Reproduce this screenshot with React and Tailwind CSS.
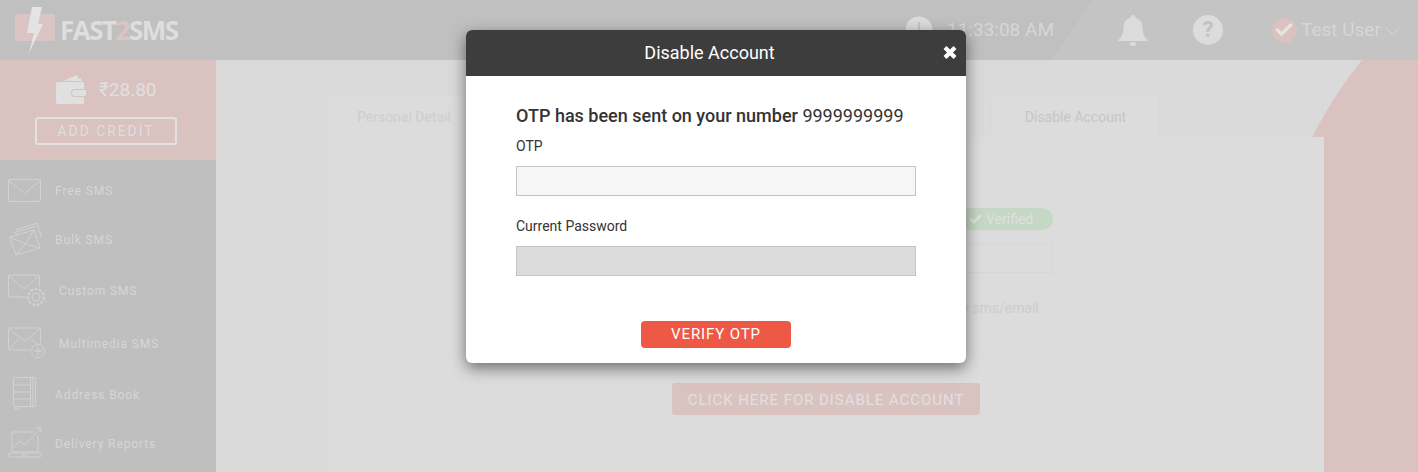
import { Check } from 'lucide-react'

const NAV_ITEMS = [
  { label: 'Free SMS', h: 'h-[49px]', textClass: '', icon: 'mail' },
  { label: 'Bulk SMS', h: 'h-[49px]', textClass: '', icon: 'bulk' },
  { label: 'Custom SMS', h: 'h-[53px]', textClass: 'ml-[4px]', icon: 'gear' },
  { label: 'Multimedia SMS', h: 'h-[53px]', textClass: 'ml-[4px]', icon: 'plus' },
  { label: 'Address Book', h: 'h-[49px]', textClass: '', icon: 'book' },
  { label: 'Delivery Reports', h: 'h-[50px]', textClass: '', icon: 'chart' },
]

function NavIcon({ type }) {
  const common = { width: 40, height: 36, viewBox: '0 0 40 36', fill: 'none', stroke: '#d2d2d2', strokeWidth: 1 }
  if (type === 'mail') {
    return (
      <svg {...common}>
        <rect x="0.5" y="6.5" width="32" height="22" rx="1.5" />
        <path d="M1 8l15.500 12L32 8" />
      </svg>
    )
  }
  if (type === 'bulk') {
    return (
      <svg {...common}>
        <path d="M8 8L29 1l4 13-2 1M2 15l24-7 6 18-24 7-6-18z" />
        <path d="M2 15l15 7 9-14M8 33l9-11 15 4" />
        <path d="M6 11l22-7" />
      </svg>
    )
  }
  if (type === 'gear') {
    return (
      <svg {...common}>
        <path d="M18 24H2a1.500 1.500 0 0 1-1.500-1.500v-19A1.500 1.500 0 0 1 2 2h28a1.500 1.500 0 0 1 1.500 1.500V13" />
        <path d="M1 3l15 13 15-13" />
        <circle cx="28" cy="24" r="4" />
        <circle cx="28" cy="24" r="8" strokeDasharray="3 1.500" strokeWidth="2" />
      </svg>
    )
  }
  if (type === 'plus') {
    return (
      <svg {...common}>
        <path d="M22 24H2a1.500 1.500 0 0 1-1.500-1.500v-19A1.500 1.500 0 0 1 2 2h29a1.500 1.500 0 0 1 1.500 1.500V17" />
        <path d="M1 3l16 12L32 3M1 23l10-10M23 13l6 5" />
        <circle cx="30" cy="25" r="6.500" />
        <path d="M30 21v8M26 25h8" />
      </svg>
    )
  }
  if (type === 'book') {
    return (
      <svg {...common}>
        <rect x="5.500" y="0.500" width="22" height="29" rx="1" />
        <path d="M22.500 1v29M25 1v29M6 8h17M6 15h17M6 22h17M7 30v3l2-1 2 1v-3" />
      </svg>
    )
  }
  return (
    <svg {...common}>
      <path d="M30 9v17H4V6h22M1 27h32v3a1 1 0 0 1-1 1H2a1 1 0 0 1-1-1v-3zM14 29h5" />
      <path d="M5 22l7-7 5 4L32 3M28 2h5v5" />
    </svg>
  )
}

function Header() {
  return (
    <header className="relative flex h-[60px] shrink-0 items-center bg-[#c0c0c0]">
      <svg className="absolute inset-0" width="1418" height="60" viewBox="0 0 1418 60">
        <path d="M1093 0H1418V60H1052z" fill="#c4c4c4" />
      </svg>
      <div className="relative ml-[15px] flex w-[163px] items-center">
        <svg width="45" height="48" viewBox="0 0 45 48" className="shrink-0">
          <rect x="0" y="8" width="40" height="27" rx="2" fill="#dbc4c4" />
          <path d="M17 1h10l-4 17h5L14 47l5-20h-7z" fill="#e4e4e4" />
        </svg>
        <span className="font-['Open_Sans',sans-serif] text-[26px] font-bold leading-none tracking-[-1.500px] text-[#dedede]">
          FAST<span className="text-[#dcc4c4]">2</span>SMS
        </span>
      </div>
      <div className="relative ml-[727px] flex items-center">
        <svg width="28" height="28" viewBox="0 0 28 28" className="shrink-0">
          <circle cx="14" cy="14" r="13.500" fill="#dcdcdc" />
          <path d="M14 6v9H9" stroke="#bdbdbd" strokeWidth="1.500" fill="none" />
        </svg>
        <span className="ml-[14px] pb-[2px] text-[19px] leading-none text-[#d6d6d6]">11:33:08 AM</span>
      </div>
      <svg className="relative ml-[63px] shrink-0" width="32" height="32" viewBox="0 0 32 32" fill="#dcdcdc">
        <path d="M16 1a2.500 2.500 0 0 1 2.500 3c5 1 7 5 7 9 0 7 2 10 5 13v1H1.500v-1c3-3 5-6 5-13 0-4 2-8 7-9A2.500 2.500 0 0 1 16 1zM12.500 28.500h7a3.500 3.500 0 0 1-7 0z" />
      </svg>
      <div className="relative ml-[44px] flex h-[30px] w-[30px] shrink-0 items-center justify-center rounded-full bg-[#dcdcdc] text-[22px] font-bold leading-none text-[#c2c2c2]">
        ?
      </div>
      <div className="relative ml-[49px] flex h-[25px] w-[25px] shrink-0 items-center justify-center rounded-full bg-[#d9c2c0]">
        <Check size={20} strokeWidth={4} className="text-[#e4e4e4]" />
      </div>
      <span className="relative ml-[4px] pb-[2px] text-[19px] leading-none text-[#d6d6d6]">Test User</span>
      <svg className="relative ml-[4px] mt-[2px]" width="15" height="9" viewBox="0 0 15 9" fill="none" stroke="#d6d6d6">
        <path d="M1 1l6.500 6.500L14 1" />
      </svg>
    </header>
  )
}

function Sidebar() {
  return (
    <aside className="w-[216px] shrink-0 bg-[#bfbfbf]">
      <div className="flex h-[100px] flex-col bg-[#d9c2c0] pt-[14px]">
        <div className="ml-[56px] flex h-[30px] items-center">
          <svg width="30" height="29" viewBox="0 0 30 29" fill="#e0e0e0">
            <path d="M7 6l14-6 2 5zM13 6l12-3 1 3z" />
            <path d="M2 7h25a1 1 0 0 1 1 1v6H19a4 4 0 0 0 0 8h9v6a1 1 0 0 1-1 1H2a2 2 0 0 1-2-2V9a2 2 0 0 1 2-2z" />
            <path d="M19 15h11v6H19a3 3 0 0 1 0-6z" />
          </svg>
          <span className="ml-[13px] text-[19px] leading-none text-[#e0e0e0]">₹28.80</span>
        </div>
        <button className="ml-[35px] mt-[13px] h-[28px] w-[142px] rounded-[3px] border-2 border-[#e2e2e2] text-[14px] leading-none tracking-[1.900px] text-[#dedede]">
          ADD CREDIT
        </button>
      </div>
      <nav className="pt-[6px]">
        {NAV_ITEMS.map((item) => (
          <div key={item.label} className={`flex items-center pl-[8px] ${item.h}`}>
            <span className="w-[47px] shrink-0">
              <NavIcon type={item.icon} />
            </span>
            <span className={`text-[12px] tracking-[0.900px] text-[#d6d6d6] ${item.textClass}`}>{item.label}</span>
          </div>
        ))}
      </nav>
    </aside>
  )
}

function Page() {
  return (
    <main className="relative flex-1 overflow-hidden bg-[#dadada]">
      <svg className="absolute inset-0" width="1202" height="412" viewBox="0 0 1202 412">
        <path d="M1146 0H1202V412H1090V90Q1112 42 1146 0z" fill="#d9c2c0" />
      </svg>
      <div className="relative ml-[112px] w-[996px] pt-[36px]">
        <div className="flex h-[41px] items-end justify-between pr-[165px]">
          <div className="flex h-[41px] w-[300px] items-center rounded-t-[3px] bg-[#dcdcdc] pl-[29px] pt-[1px] text-[14px] text-[#cecece]">
            Personal Detail
          </div>
          <div className="flex h-[41px] w-[167px] items-center justify-center rounded-t-[3px] bg-[#dcdcdc] pt-[1px] text-[14px] text-[#c6c6c6] shadow-[0_0_3px_rgba(0,0,0,0.03)]">
            Disable Account
          </div>
        </div>
        <div className="h-[340px] bg-[#dcdcdc] pl-[271px] pt-[71px]">
          <div className="flex w-[454px] flex-col">
            <div className="flex justify-end">
              <span className="flex h-[22px] w-[93px] items-center rounded-full bg-[#c5d7c5] pl-[19px] text-[14px] text-[#e0e0e0]">
                <Check size={13} strokeWidth={5} className="mr-[4px] -ml-[10px] shrink-0" />
                Verified
              </span>
            </div>
            <div className="mt-[13px] h-[30px] border border-[#d6d6d6]" />
            <p className="mt-[26px] pr-[14px] text-right text-[14px] leading-[18px] text-[#cccccc]">by sms/email</p>
            <button className="mx-auto mt-[66px] h-[32px] w-[308px] rounded-[3px] bg-[#d9c2c0] pt-[2px] text-[15px] leading-none tracking-[0.950px] text-[#e0e0e0]">
              CLICK HERE FOR DISABLE ACCOUNT
            </button>
          </div>
        </div>
      </div>
    </main>
  )
}

function Modal() {
  return (
    <div className="absolute left-[466px] top-[30px] w-[500px] overflow-hidden rounded-[6px] bg-white shadow-[0_5px_15px_rgba(0,0,0,0.5)]">
      <div className="relative flex h-[46px] items-center justify-center bg-[#3d3d3d] pb-[2px] pr-[13px] text-[18px] text-white">
        Disable Account
        <svg className="absolute right-[9px] top-[15px]" width="14" height="15" viewBox="0 0 14 15" stroke="#fff" strokeWidth="4.200">
          <path d="M2 2.500l10 10M12 2.500L2 12.500" />
        </svg>
      </div>
      <div className="px-[50px] pt-[28px]">
        <h3 className="text-[18px] font-medium leading-[24px] text-[#333]">
          OTP has been sent on your number <span className="font-normal">9999999999</span>
        </h3>
        <label className="mt-[8px] block text-[14px] leading-[20px] text-[#333]">OTP</label>
        <div className="mt-[10px] h-[30px] w-[400px] border border-[#c4c4c4] bg-[#f6f6f6]" />
        <label className="mt-[20px] block text-[14px] leading-[20px] text-[#333]">Current Password</label>
        <div className="mt-[10px] h-[30px] w-[400px] border border-[#c4c4c4] bg-[#dcdcdc]" />
        <div className="flex justify-center pb-[15px] pt-[45px]">
          <button className="h-[27px] w-[150px] rounded-[4px] bg-[#ed5944] text-[15px] leading-none tracking-[0.900px] text-white">
            VERIFY OTP
          </button>
        </div>
      </div>
    </div>
  )
}

export default function App() {
  return (
    <div className="relative flex h-[472px] w-[1418px] flex-col overflow-hidden font-['Roboto',sans-serif]">
      <Header />
      <div className="flex min-h-0 flex-1">
        <Sidebar />
        <Page />
      </div>
      <Modal />
    </div>
  )
}
